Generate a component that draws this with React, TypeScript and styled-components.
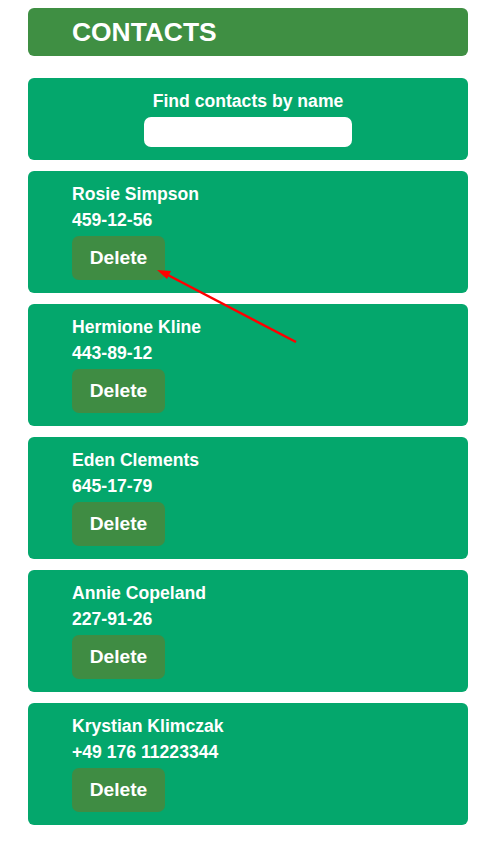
import React from 'react';
import styled, { createGlobalStyle } from 'styled-components';

const GlobalStyle = createGlobalStyle`
  body {
    margin: 8px;
    background: #ffffff;
    font-family: 'Liberation Sans', Arial, sans-serif;
  }
`;

const Page = styled.div`
  position: relative;
  width: 440px;
  margin-left: 20px;
  display: flex;
  flex-direction: column;
`;

const Header = styled.header`
  height: 48px;
  display: flex;
  align-items: center;
  padding-left: 44px;
  background: #3f8f43;
  border-radius: 6px;
  margin-bottom: 22px;
`;

const Title = styled.h1`
  margin: 0;
  font-size: 26.4px;
  font-weight: 700;
  color: #ffffff;
  text-transform: uppercase;
`;

const FilterCard = styled.label`
  display: flex;
  flex-direction: column;
  align-items: center;
  gap: 6px;
  padding: 13px 0;
  background: #04a76c;
  border-radius: 6px;
  margin-bottom: 11px;
`;

const FilterLabel = styled.span`
  font-size: 17.6px;
  line-height: 20px;
  font-weight: 700;
  color: #ffffff;
`;

const FilterInput = styled.input`
  width: 208px;
  height: 30px;
  box-sizing: border-box;
  border: none;
  border-radius: 7px;
  background: #ffffff;
  outline: none;
`;

const List = styled.ul`
  list-style: none;
  margin: 0;
  padding: 0;
  display: flex;
  flex-direction: column;
  gap: 11px;
`;

const Card = styled.li`
  display: flex;
  flex-direction: column;
  align-items: flex-start;
  padding: 13px 0 13px 44px;
  background: #04a76c;
  border-radius: 6px;
`;

const Name = styled.p`
  margin: 0 0 6px;
  font-size: 17.6px;
  line-height: 20px;
  font-weight: 700;
  color: #ffffff;
`;

const Phone = styled(Name)`
  margin-bottom: 6px;
`;

const DeleteButton = styled.button`
  width: 93px;
  height: 44px;
  border: none;
  border-radius: 7px;
  background: #3f8c43;
  color: #ffffff;
  font-family: 'Liberation Sans', Arial, sans-serif;
  font-size: 19.2px;
  font-weight: 700;
  cursor: pointer;
`;

const Arrow = styled.svg`
  position: absolute;
  left: 0;
  top: 0;
  pointer-events: none;
`;

const contacts = [
  { id: 1, name: 'Rosie Simpson', number: '459-12-56' },
  { id: 2, name: 'Hermione Kline', number: '443-89-12' },
  { id: 3, name: 'Eden Clements', number: '645-17-79' },
  { id: 4, name: 'Annie Copeland', number: '227-91-26' },
  { id: 5, name: 'Krystian Klimczak', number: '+49 176 11223344' },
];

export default function App() {
  return (
    <>
      <GlobalStyle />
      <Page>
        <Header>
          <Title>Contacts</Title>
        </Header>
        <FilterCard>
          <FilterLabel>Find contacts by name</FilterLabel>
          <FilterInput type="text" />
        </FilterCard>
        <List>
          {contacts.map(c => (
            <Card key={c.id}>
              <Name>{c.name}</Name>
              <Phone>{c.number}</Phone>
              <DeleteButton type="button">Delete</DeleteButton>
            </Card>
          ))}
        </List>
        {/* annotation arrow, page coords minus the 28/8 offset */}
        <Arrow width="440" height="400" viewBox="0 0 440 400">
          <line x1="268" y1="334" x2="136" y2="265" stroke="#f00" strokeWidth="2.5" />
          <polygon points="129,262 143,263 139,271" fill="#f00" />
        </Arrow>
      </Page>
    </>
  );
}
